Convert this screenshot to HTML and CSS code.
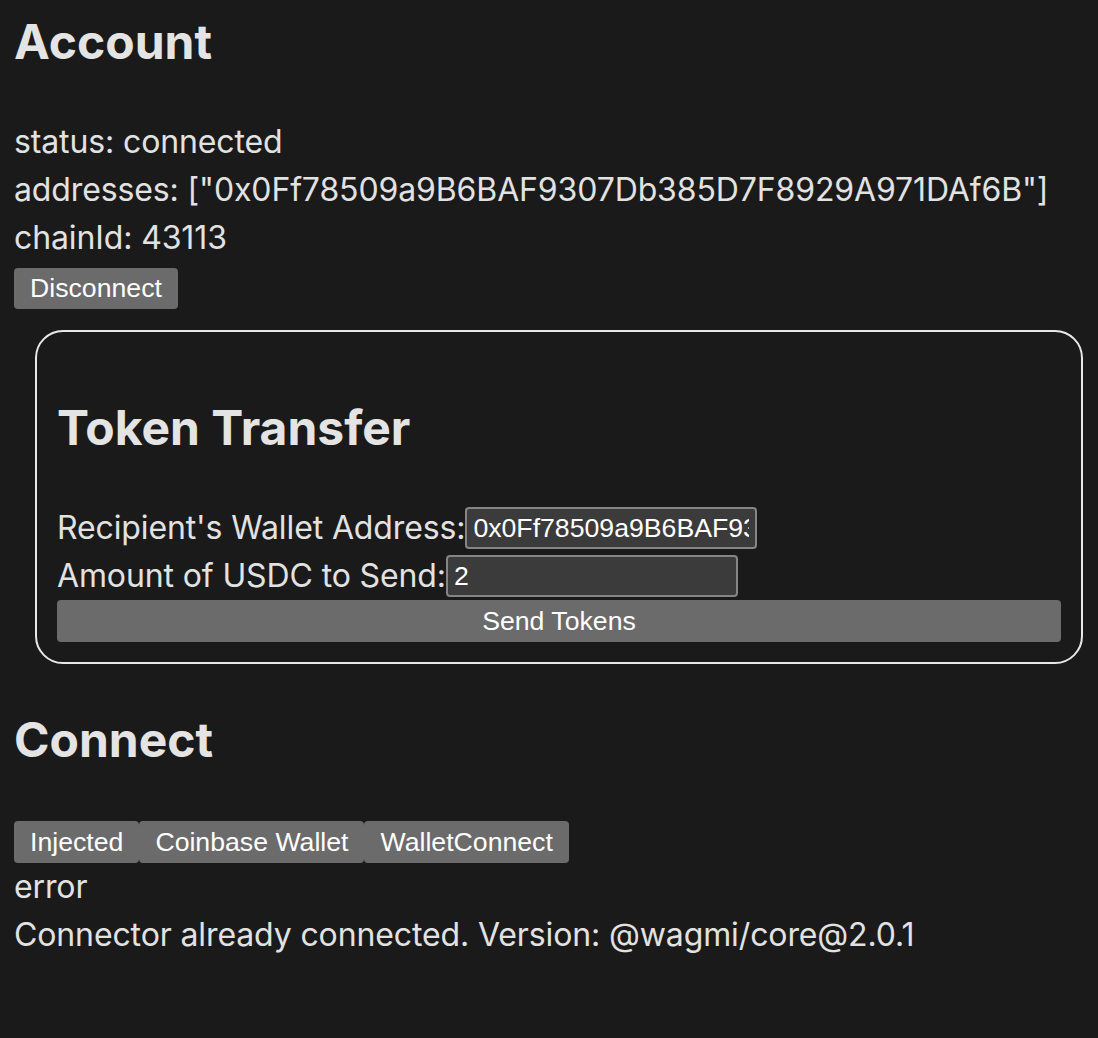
FILE: index.html
```html
<!DOCTYPE html>
<html lang="en">
<head>
<meta charset="utf-8">
<title>wagmi</title>
<link rel="stylesheet" href="styles.css">
</head>
<body>
<div class="page">
  <h2 class="title">Account</h2>
  <div class="info">
    status: connected
    <br>
    addresses: ["0x0Ff78509a9B6BAF9307Db385D7F8929A971DAf6B"]
    <br>
    chainId: 43113
  </div>
  <div class="actions">
    <button class="btn" type="button">Disconnect</button>
  </div>

  <div class="card">
    <h2 class="title card-title">Token Transfer</h2>
    <form class="transfer">
      <div class="field"><label class="label">Recipient's Wallet Address:</label><input class="input" type="text" value="0x0Ff78509a9B6BAF9307Db385D7F8929A971DAf6B"></div>
      <div class="field"><label class="label">Amount of USDC to Send:</label><input class="input" type="text" value="2"></div>
      <button class="btn btn-wide" type="button">Send Tokens</button>
    </form>
  </div>

  <h2 class="title connect-title">Connect</h2>
  <div class="connectors">
    <button class="btn" type="button">Injected</button><button class="btn" type="button">Coinbase Wallet</button><button class="btn" type="button">WalletConnect</button>
  </div>
  <div class="info">error</div>
  <div class="info">Connector already connected. Version: @wagmi/core@2.0.1</div>
</div>
</body>
</html>
```

FILE: styles.css
```css
html, body {
  margin: 0;
  background: #1a1a1a;
}

body {
  color: #e2e2e2;
  font-family: Inter, "Noto Sans", sans-serif;
  font-size: 32px;
  line-height: 48px;
  letter-spacing: -0.12px;
}

.page {
  padding: 6px 16px 0 14px;
}

.title {
  margin: 0 0 40px;
  font-size: 48px;
  line-height: 72px;
  font-weight: 700;
  color: #e4e4e4;
  letter-spacing: 0;
}

.info {
  line-height: 48px;
}

.actions {
  display: flex;
  padding-top: 6px;
}

.btn {
  font-family: "Liberation Sans", Arial, sans-serif;
  font-size: 26.67px;
  letter-spacing: 0;
  line-height: 31px;
  padding: 5px 16px;
  margin: 0;
  border: none;
  border-radius: 4px;
  background: #6b6b6b;
  color: #ffffff;
}

.card {
  margin: 21px -1px 0 21px;
  padding: 20px;
  border: 2px solid #e8e8e8;
  border-radius: 28px;
}

.card-title {
  margin-top: 40px;
}

.transfer {
  display: flex;
  flex-direction: column;
}

.field {
  display: flex;
  align-items: center;
  height: 48px;
}

.input {
  box-sizing: border-box;
  width: 292px;
  height: 42px;
  margin: 0;
  padding: 2px 6px;
  border: 2px solid #858585;
  border-radius: 4px;
  background: #3b3b3b;
  color: #ffffff;
  font-family: "Liberation Sans", Arial, sans-serif;
  font-size: 26.67px;
  letter-spacing: 0;
}

.btn-wide {
  width: 100%;
  line-height: 32px;
}

.connect-title {
  margin-top: 40px;
}

.connectors {
  display: flex;
  padding-top: 5px;
}

.connectors .btn {
  line-height: 32px;
}
```
